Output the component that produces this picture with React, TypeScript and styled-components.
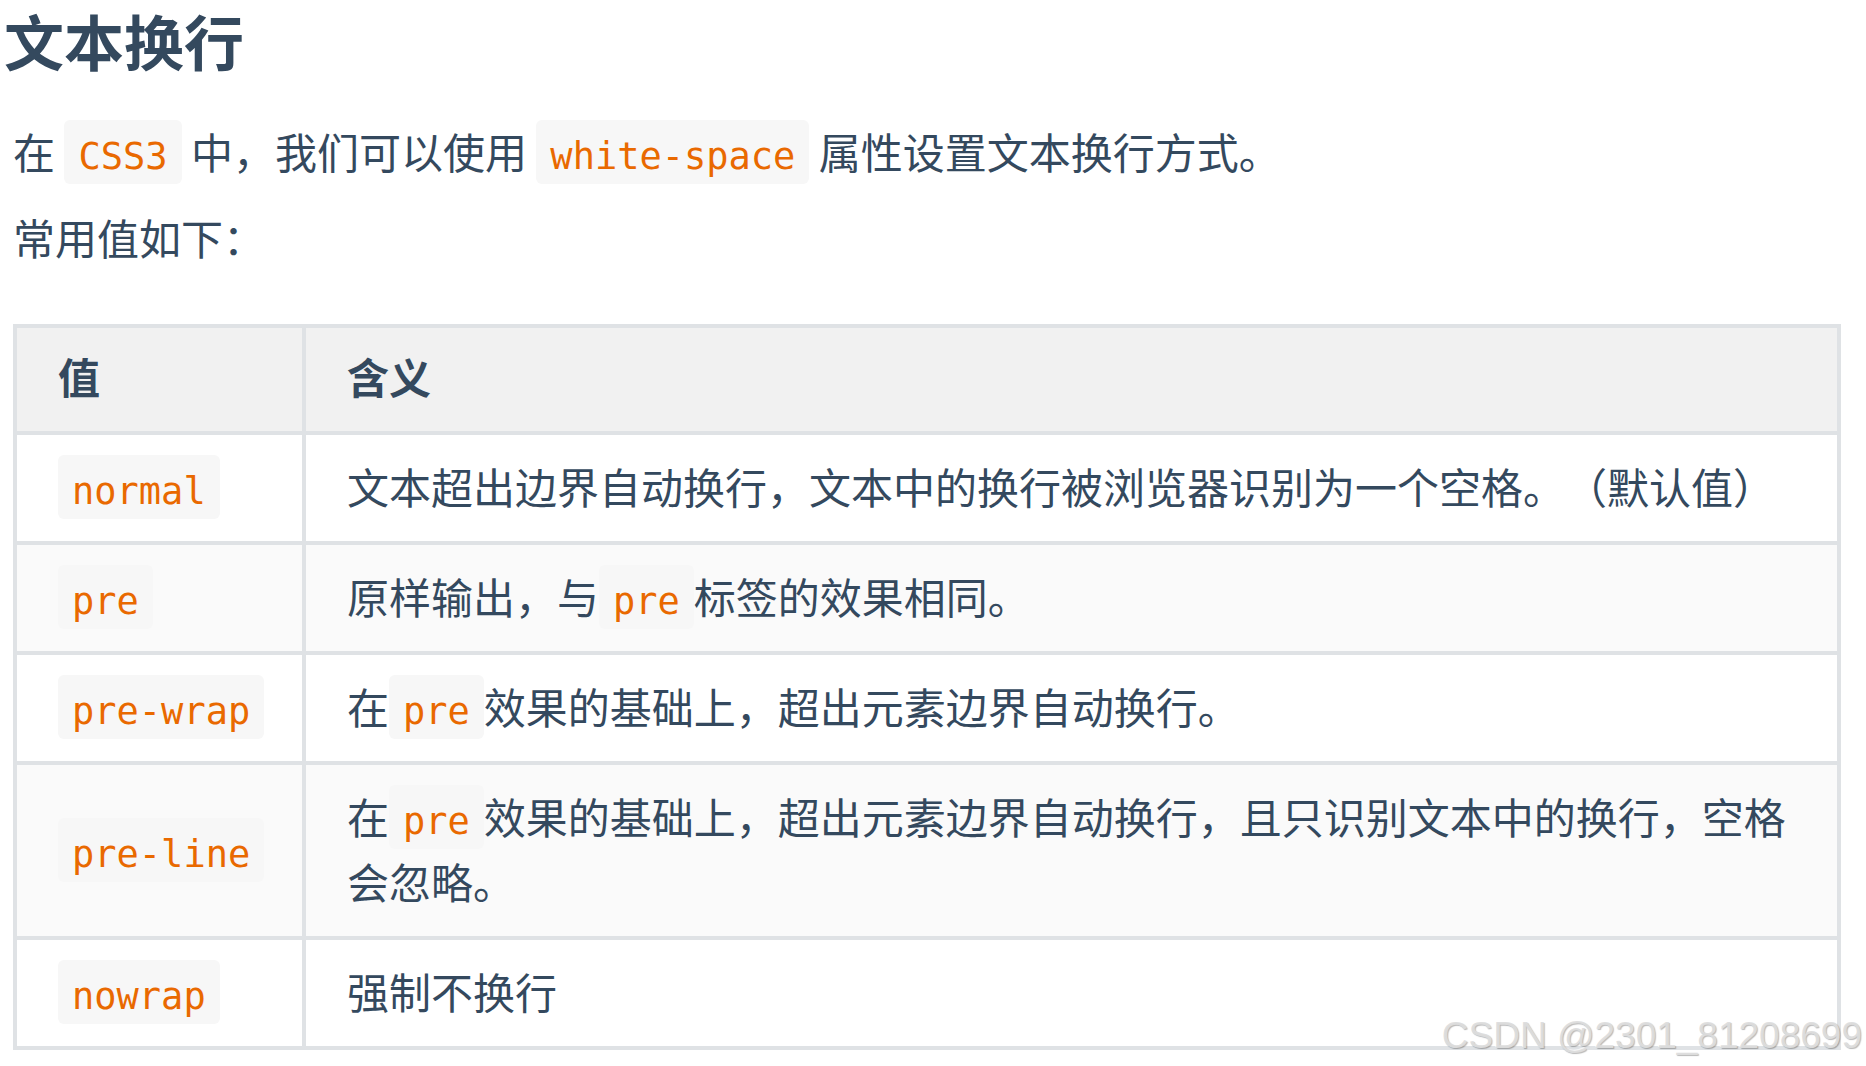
import React from "react";
import styled, { createGlobalStyle } from "styled-components";

const GlobalStyle = createGlobalStyle`
  html, body {
    margin: 0;
    padding: 0;
    background: #ffffff;
  }
  body {
    font-family: "Noto Sans CJK SC", "Noto Sans", sans-serif;
    color: #34495e;
    text-spacing-trim: space-all;
  }
`;

const Page = styled.div`
  position: relative;
  box-sizing: border-box;
  width: 1866px;
  height: 1066px;
  overflow: hidden;
  padding-left: 4px;
`;

const Title = styled.h1`
  margin: 0 0 38px;
  font-size: 60px;
  line-height: 80px;
  font-weight: 700;
  color: #34495e;
`;

const Content = styled.div`
  margin-left: 9px;
`;

const Paragraph = styled.p`
  margin: 0;
  font-size: 42px;
  line-height: 65px;
  & + & {
    margin-top: 21px;
  }
`;

const Code = styled.code`
  font-family: "DejaVu Sans Mono", "Liberation Mono", monospace;
  font-size: 37px;
  line-height: 1;
  white-space: nowrap;
  color: #e96900;
  background: #f7f7f7;
  padding: 15px 14px 6px;
  border-radius: 6px;
`;

const Table = styled.table`
  margin-top: 55px;
  width: 1828px;
  table-layout: fixed;
  border-collapse: separate;
  border-spacing: 0;
  border-top: 4px solid #dfe2e5;
  border-left: 4px solid #dfe2e5;
  font-size: 42px;
  line-height: 65px;
`;

const Col = styled.col<{ $w: number }>`
  width: ${(p) => p.$w}px;
`;

const HeadCell = styled.th`
  text-align: left;
  font-weight: 700;
  padding: 15px 41px 23px;
  background: #f1f1f1;
  border-right: 4px solid #dfe2e5;
  border-bottom: 4px solid #dfe2e5;
`;

const Row = styled.tr`
  background: #ffffff;
  &:nth-child(even) {
    background: #fafafa;
  }
`;

const Cell = styled.td`
  text-align: left;
  vertical-align: middle;
  padding: 18px 41px 23px;
  border-right: 4px solid #dfe2e5;
  border-bottom: 4px solid #dfe2e5;
`;

const Watermark = styled.div`
  position: absolute;
  right: 4px;
  bottom: 12px;
  font-family: "Liberation Sans", Arial, sans-serif;
  font-size: 37px;
  line-height: 37px;
  color: rgba(222, 222, 222, 0.95);
  text-shadow: 1px 1px 1px rgba(0, 0, 0, 0.28), -1px -1px 0 rgba(255, 255, 255, 0.7);
  white-space: nowrap;
  pointer-events: none;
`;

type Item = { value: string; meaning: React.ReactNode };

const items: Item[] = [
  {
    value: "normal",
    meaning: "文本超出边界自动换行，文本中的换行被浏览器识别为一个空格。（默认值）",
  },
  {
    value: "pre",
    meaning: (
      <>
        原样输出，与<Code>pre</Code>标签的效果相同。
      </>
    ),
  },
  {
    value: "pre-wrap",
    meaning: (
      <>
        在<Code>pre</Code>效果的基础上，超出元素边界自动换行。
      </>
    ),
  },
  {
    value: "pre-line",
    meaning: (
      <>
        在<Code>pre</Code>效果的基础上，超出元素边界自动换行，且只识别文本中的换行，空格会忽略。
      </>
    ),
  },
  {
    value: "nowrap",
    meaning: "强制不换行",
  },
];

export default function App() {
  return (
    <>
      <GlobalStyle />
      <Page>
        <Title>文本换行</Title>
        <Content>
          <Paragraph>
            在 <Code>CSS3</Code> 中，我们可以使用 <Code>white-space</Code> 属性设置文本换行方式。
          </Paragraph>
          <Paragraph>常用值如下：</Paragraph>
          <Table>
            <colgroup>
              <Col $w={289} />
              <Col $w={1535} />
            </colgroup>
            <thead>
              <tr>
                <HeadCell>值</HeadCell>
                <HeadCell>含义</HeadCell>
              </tr>
            </thead>
            <tbody>
              {items.map((it) => (
                <Row key={it.value}>
                  <Cell>
                    <Code>{it.value}</Code>
                  </Cell>
                  <Cell>{it.meaning}</Cell>
                </Row>
              ))}
            </tbody>
          </Table>
        </Content>
        <Watermark>CSDN @2301_81208699</Watermark>
      </Page>
    </>
  );
}
